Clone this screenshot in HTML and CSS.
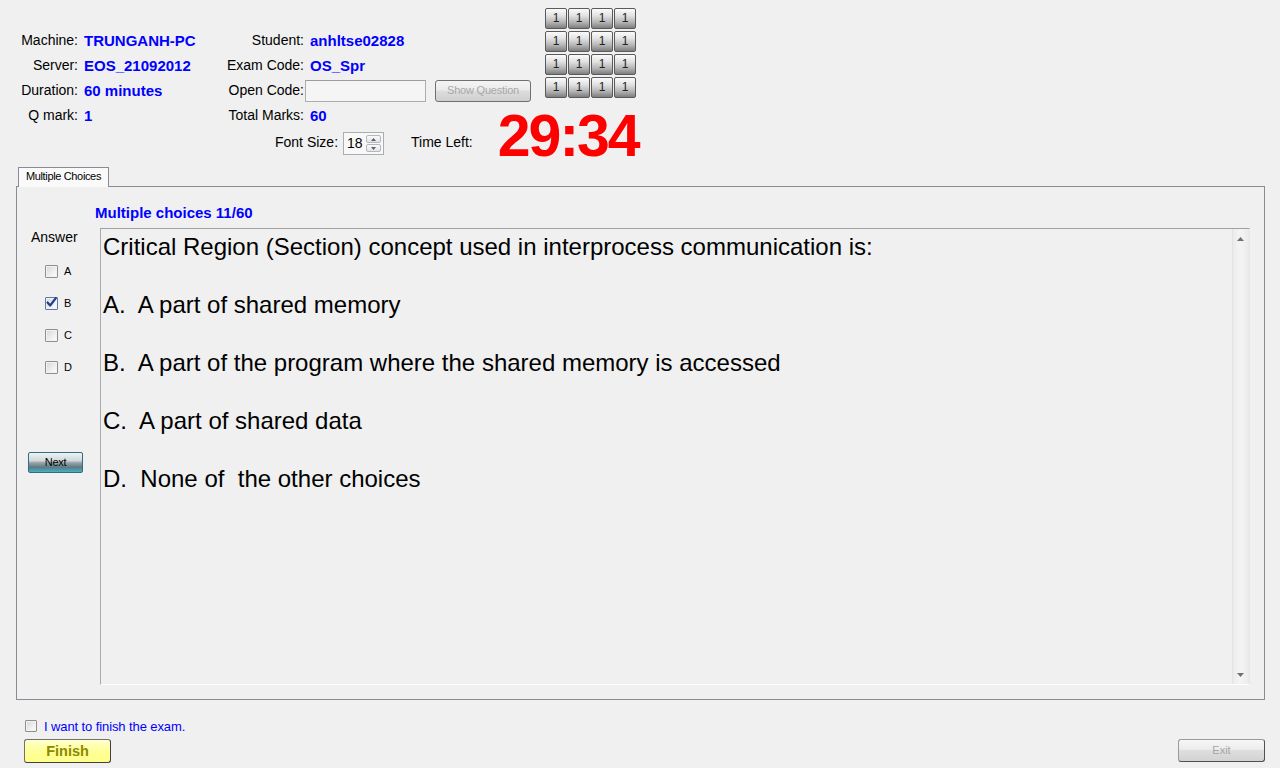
FILE: index.html
```html
<!DOCTYPE html>
<html>
<head>
<meta charset="utf-8">
<title>Exam</title>
<link rel="stylesheet" href="styles.css">
</head>
<body>
<div class="header">
  <div class="info">
    <div class="fields">
      <div class="grid g1">
        <span class="lbl">Machine:</span><span class="val">TRUNGANH-PC</span>
        <span class="lbl">Server:</span><span class="val">EOS_21092012</span>
        <span class="lbl">Duration:</span><span class="val">60 minutes</span>
        <span class="lbl">Q mark:</span><span class="val">1</span>
      </div>
      <div class="grid g2">
        <span class="lbl">Student:</span><span class="val">anhltse02828</span>
        <span class="lbl">Exam Code:</span><span class="val">OS_Spr</span>
        <span class="lbl">Open Code:</span><span class="opencode"><span class="textbox"></span><span class="btn-show">Show Question</span></span>
        <span class="lbl">Total Marks:</span><span class="val">60</span>
      </div>
    </div>
    <div class="timerow">
      <span class="lbl2 fs">Font Size:</span>
      <span class="spinner">
        <span class="spin-val">18</span>
        <span class="spin-btns">
          <span class="spin-b"><svg width="5" height="3" viewBox="0 0 5 3"><path d="M0 3 L2.5 0 L5 3Z" fill="#4d6185"/></svg></span>
          <span class="spin-b"><svg width="5" height="3" viewBox="0 0 5 3"><path d="M0 0 L2.5 3 L5 0Z" fill="#4d6185"/></svg></span>
        </span>
      </span>
      <span class="lbl2 tl">Time Left:</span>
      <span class="clock">29:34</span>
    </div>
  </div>
  <div class="qgrid">
    <span class="nb">1</span><span class="nb">1</span><span class="nb">1</span><span class="nb">1</span>
    <span class="nb">1</span><span class="nb">1</span><span class="nb">1</span><span class="nb">1</span>
    <span class="nb">1</span><span class="nb">1</span><span class="nb">1</span><span class="nb">1</span>
    <span class="nb">1</span><span class="nb">1</span><span class="nb">1</span><span class="nb">1</span>
  </div>
</div>

<div class="tabs"><div class="tab">Multiple Choices</div></div>
<div class="panel">
  <div class="ptitle">Multiple choices 11/60</div>
  <div class="pbody">
    <div class="answers">
      <div class="ans-title">Answer</div>
      <div class="opts">
        <div class="opt"><span class="cb"></span><span>A</span></div>
        <div class="opt"><span class="cb checked"><svg width="13" height="13" viewBox="0 0 13 13"><path d="M2.5 6.5 L5.2 9.5 L10.8 2.2" fill="none" stroke="#1f3d8f" stroke-width="2.2" stroke-linecap="round" stroke-linejoin="round"/></svg></span><span>B</span></div>
        <div class="opt"><span class="cb"></span><span>C</span></div>
        <div class="opt"><span class="cb"></span><span>D</span></div>
      </div>
      <div class="next">Next</div>
    </div>
    <div class="qbox">
      <div class="qtext"><p>Critical Region (Section) concept used in interprocess communication is:</p><p>A.  A part of shared memory</p><p>B.  A part of the program where the shared memory is accessed</p><p>C.  A part of shared data</p><p>D.  None of  the other choices</p></div>
      <div class="vscroll">
        <svg width="7" height="4" viewBox="0 0 7 4"><path d="M0 4 L3.5 0 L7 4Z" fill="#707070"/></svg>
        <svg width="7" height="4" viewBox="0 0 7 4"><path d="M0 0 L3.5 4 L7 0Z" fill="#707070"/></svg>
      </div>
    </div>
  </div>
</div>

<div class="footer">
  <div class="finish-row"><span class="cb small"></span><span class="finish-lbl">I want to finish the exam.</span></div>
  <div class="btn-row">
    <span class="btn-finish">Finish</span>
    <span class="btn-exit">Exit</span>
  </div>
</div>
</body>
</html>
```

FILE: styles.css
```css
* { box-sizing: border-box; }
html, body { margin: 0; padding: 0; }
body {
  width: 1280px;
  height: 768px;
  overflow: hidden;
  background: #f0f0f0;
  font-family: "Liberation Sans", Arial, sans-serif;
  color: #000;
}

/* ---------- header ---------- */
.header {
  display: flex;
  align-items: flex-start;
  padding-left: 8px;
  height: 167px;
}
.info { width: 537px; flex-shrink: 0; padding-top: 28px; }
.fields { display: flex; }
.grid {
  display: grid;
  grid-auto-rows: 25px;
  align-items: center;
  line-height: 25px;
}
.g1 { width: 197px; grid-template-columns: 70px 1fr; column-gap: 6px; }
.g2 { width: 340px; grid-template-columns: 99px 1fr; column-gap: 6px; }
.lbl { font-size: 14px; text-align: right; white-space: nowrap; }
.val { font-size: 15px; font-weight: bold; color: #0000ff; white-space: nowrap; }

.opencode { display: flex; align-items: center; margin-left: -5px; height: 25px; }
.textbox {
  width: 121px;
  height: 22px;
  border: 1px solid #abadb3;
  border-top-color: #9a9ca3;
  background: #f5f5f5;
}
.btn-show {
  margin-left: 9px;
  width: 96px;
  height: 22px;
  border: 1px solid #707070;
  border-radius: 3px;
  background: linear-gradient(#f4f4f4, #ebebeb 45%, #dddddd 50%, #cfcfcf);
  color: #a8a8a8;
  font-size: 11px;
  letter-spacing: -0.2px;
  display: flex;
  align-items: center;
  justify-content: center;
  line-height: 1;
}

.timerow { display: flex; align-items: flex-start; height: 30px; }
.timerow > * { flex-shrink: 0; }
.lbl2 { font-size: 14px; line-height: 28px; white-space: nowrap; }
.fs { margin-left: 267px; }
.spinner {
  margin-left: 5px;
  margin-top: 4px;
  width: 41px;
  height: 23px;
  border: 1px solid #abadb3;
  background: #f8f8f8;
  display: flex;
}
.spin-val { flex: 1; font-size: 14px; line-height: 21px; padding-left: 3px; }
.spin-btns {
  width: 15px;
  margin: 2px 2px 2px 0;
  display: flex;
  flex-direction: column;
  gap: 1px;
}
.spin-b {
  flex: 1;
  border: 1px solid #b7b7b7;
  border-radius: 2px;
  background: linear-gradient(#fafafa, #e4e4e4);
  display: flex;
  align-items: center;
  justify-content: center;
}
.spin-b svg { display: block; }
.tl { margin-left: 27px; }
.clock {
  margin-left: 25px;
  align-self: flex-end;
  font-size: 59px;
  font-weight: bold;
  color: #ff0000;
  letter-spacing: -2px;
  line-height: 43px;
  white-space: nowrap;
}

.qgrid {
  margin-top: 8px;
  display: grid;
  grid-template-columns: repeat(4, 22px);
  grid-auto-rows: 21px;
  column-gap: 1px;
  row-gap: 2px;
}
.nb {
  border: 1px solid #5a5a5a;
  border-radius: 2px;
  background: linear-gradient(#fbfbfb, #e2e2e2 35%, #b4b4b4 70%, #7e7e7e);
  font-size: 12px;
  line-height: 19px;
  text-align: center;
  color: #222;
}

/* ---------- tab + panel ---------- */
.tabs {
  position: relative;
  z-index: 1;
  height: 19px;
  padding-left: 18px;
}
.tab {
  width: 91px;
  height: 20px;
  border: 1px solid #898c95;
  border-bottom: none;
  background: #fafafa;
  font-size: 11px;
  letter-spacing: -0.35px;
  text-align: center;
  line-height: 17px;
}
.panel {
  margin-left: 16px;
  width: 1249px;
  height: 514px;
  border: 1px solid #898c95;
  padding-top: 17px;
}
.ptitle {
  margin-left: 78px;
  font-size: 15px;
  font-weight: bold;
  color: #0000ff;
  line-height: 18px;
}
.pbody { display: flex; margin-top: 6px; }

.answers { width: 83px; }
.ans-title { padding-left: 14px; font-size: 14px; line-height: 18px; }
.opts { margin-top: 9px; }
.opt {
  display: flex;
  align-items: center;
  height: 32px;
  padding-left: 28px;
  font-size: 11px;
}
.cb {
  width: 13px;
  height: 13px;
  margin-right: 6px;
  border: 1px solid #8e8f8f;
  border-radius: 1px;
  background: linear-gradient(135deg, #d6d6d6, #f4f4f4 70%, #fcfcfc);
  box-shadow: inset 0 0 0 1px #f2f2f2;
  display: block;
  position: relative;
}
.cb.checked { border-color: #5a7ab0; }
.cb.checked svg { position: absolute; left: -1px; top: -2px; }
.next {
  margin-left: 11px;
  margin-top: 69px;
  width: 55px;
  height: 21px;
  border: 1px solid #2e6e7e;
  border-radius: 2px;
  background: linear-gradient(#eef2f3 0%, #d0d8db 40%, #93a3a8 52%, #5f7a82 75%, #43b2c6 100%);
  font-size: 11px;
  letter-spacing: -0.3px;
  line-height: 19px;
  text-align: center;
  color: #000;
}

.qbox {
  width: 1150px;
  height: 457px;
  border: 1px solid;
  border-color: #a0a0a0 #e6e6e6 #ffffff #a9a9a9;
  display: flex;
}
.qtext {
  flex: 1;
  padding: 3px 0 0 2px;
  font-size: 24px;
  line-height: 29px;
  white-space: pre-wrap;
}
.qtext p { margin: 0 0 29px; }
.vscroll {
  width: 17px;
  display: flex;
  flex-direction: column;
  justify-content: space-between;
  align-items: center;
  padding: 8px 0 7px;
  border-left: 1px solid #e4e4e4;
  border-right: 1px solid #e9e9e9;
  background: linear-gradient(90deg, #ececec, #f3f3f3 40%, #f3f3f3 60%, #ececec);
}
.vscroll svg { display: block; }

/* ---------- footer ---------- */
.footer { padding: 16px 15px 0 24px; }
.finish-row { display: flex; align-items: center; height: 20px; }
.cb.small { width: 12px; height: 12px; margin-left: 1px; margin-right: 7px; }
.finish-lbl { font-size: 13px; color: #0000ff; letter-spacing: -0.1px; }
.btn-row { display: flex; justify-content: space-between; margin-top: 3px; }
.btn-finish {
  width: 87px;
  height: 24px;
  border: 1px solid #707070;
  border-right-color: #404040;
  border-bottom-color: #404040;
  border-radius: 3px;
  background: linear-gradient(#ffffd0, #ffff9c 45%, #ffff88);
  color: #8a8a00;
  font-size: 14.5px;
  font-weight: bold;
  line-height: 22px;
  text-align: center;
}
.btn-exit {
  width: 87px;
  height: 23px;
  border: 1px solid #9a9a9a;
  border-right-color: #505050;
  border-bottom-color: #505050;
  border-radius: 3px;
  background: linear-gradient(#f6f6f6, #ececec 45%, #dedede 50%, #d2d2d2);
  color: #a6a6a6;
  font-size: 11px;
  line-height: 21px;
  text-align: center;
}
```
